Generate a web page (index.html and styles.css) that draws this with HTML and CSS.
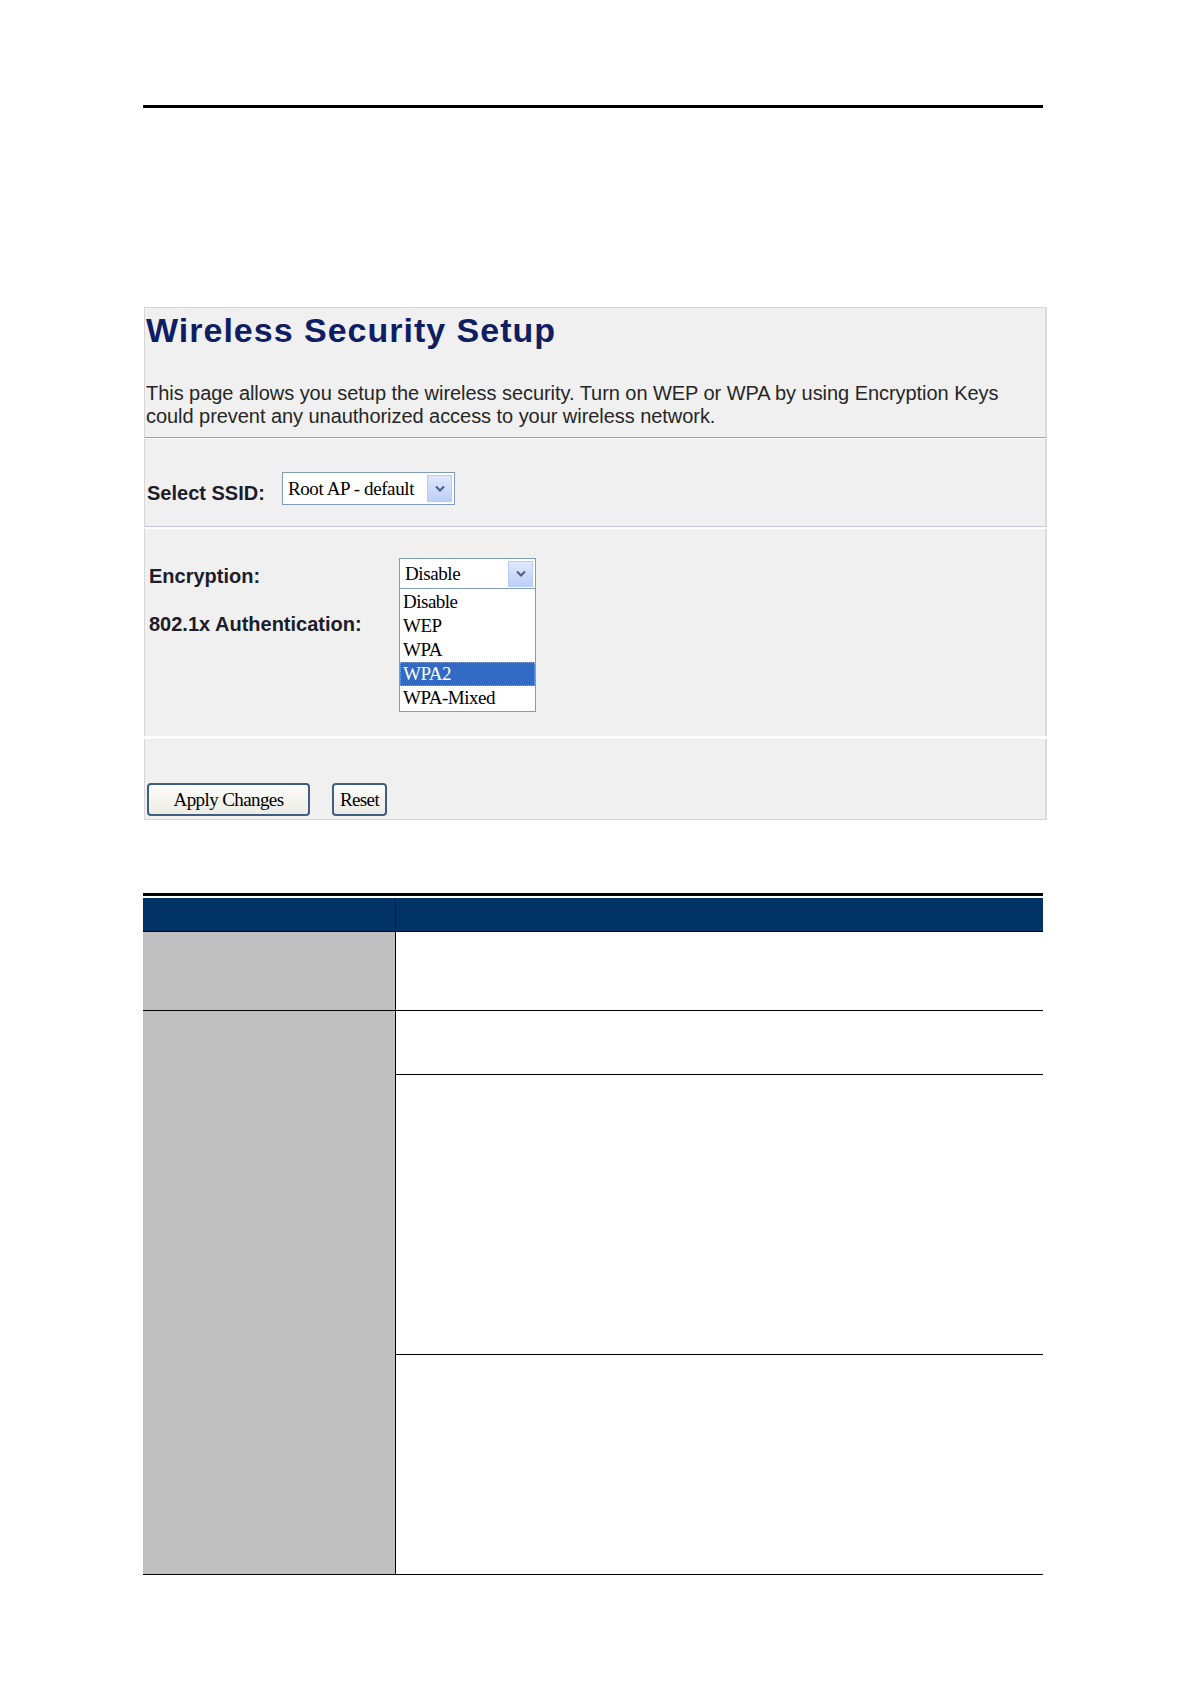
FILE: index.html
```html
<!DOCTYPE html>
<html lang="en">
<head>
  <meta charset="UTF-8">
  <link rel="stylesheet" href="styles.css">
  <title>Wireless Security Setup</title>
</head>
<body>

<div class="page">
  <div class="top-rule"></div>

  <div class="shot">
    <div class="shot-sec intro">
      <h1>Wireless Security Setup</h1>
      <p>This page allows you setup the wireless security. Turn on WEP or WPA by using Encryption Keys<br>could prevent any unauthorized access to your wireless network.</p>
    </div>

    <div class="shot-sec ssid">
      <div class="lbl ssid-lbl">Select SSID:</div>
      <div class="select ssid-select">
        <span class="select-text">Root AP - default</span>
        <span class="arrow"><svg width="10" height="7" viewBox="0 0 10 7"><path d="M1 1.5 L5 5.5 L9 1.5" fill="none" stroke="#4b5f86" stroke-width="2"/></svg></span>
      </div>
    </div>

    <div class="shot-sec enc">
      <div class="labels">
        <div class="lbl enc-lbl">Encryption:</div>
        <div class="lbl auth-lbl">802.1x Authentication:</div>
      </div>
      <div class="enc-field">
        <div class="select enc-select">
          <span class="select-text">Disable</span>
          <span class="arrow"><svg width="10" height="7" viewBox="0 0 10 7"><path d="M1 1.5 L5 5.5 L9 1.5" fill="none" stroke="#4b5f86" stroke-width="2"/></svg></span>
        </div>
        <ul class="options">
          <li>Disable</li>
          <li>WEP</li>
          <li>WPA</li>
          <li class="selected">WPA2</li>
          <li>WPA-Mixed</li>
        </ul>
      </div>
    </div>

    <div class="shot-sec actions">
      <button class="btn apply">Apply Changes</button>
      <button class="btn reset">Reset</button>
    </div>
  </div>

  <div class="table-rule"></div>
  <div class="param-table">
    <div class="th th-name"></div>
    <div class="th th-desc"></div>

    <div class="name-cell row1"></div>
    <div class="desc-cell row1"></div>

    <div class="name-cell row2"></div>
    <div class="desc-cell sub1"></div>
    <div class="desc-cell sub2"></div>
    <div class="desc-cell sub3"></div>
  </div>
</div>

</body>
</html>
```

FILE: styles.css
```css
body {
  margin: 0;
  background: #fff;
  font-family: 'Liberation Sans', Arial, sans-serif;
}

.page {
  width: 900px;
  margin-left: 143px;
}

.top-rule {
  margin-top: 105px;
  height: 3px;
  background: #000;
}

/* screenshot of the router page */
.shot {
  margin-top: 199px;
  margin-left: 1px;
  width: 903px;
}

.shot-sec {
  background: #f0f0f0;
  border-left: 1px solid #d6d6d6;
  border-right: 2px solid #dadada;
}

.intro {
  border-top: 1px solid #d4d4d4;
  padding: 3px 0 9px 1px;
  border-bottom: 1px solid #a4a4a4;
  box-shadow: 0 1px 0 #fafafa;
}

.intro h1 {
  margin: 0;
  font-size: 34px;
  line-height: 38px;
  letter-spacing: 1px;
  font-weight: bold;
  color: #0f1d62;
}

.intro p {
  margin: 33px 0 0;
  font-size: 20px;
  line-height: 23px;
  letter-spacing: -0.05px;
  color: #262626;
}

.lbl {
  font-size: 20px;
  line-height: 23px;
  font-weight: bold;
  color: #1c1c2a;
}

.ssid {
  display: flex;
  align-items: flex-start;
  margin-top: 1px;
  padding: 33px 0 21px 2px;
  border-bottom: 1px solid #c2c3d6;
  box-shadow: 0 1px 0 #fafafa;
}

.ssid-lbl {
  width: 135px;
  margin-top: 10px;
}

.select {
  display: flex;
  align-items: center;
  justify-content: space-between;
  box-sizing: border-box;
  background: #fff;
  border: 1px solid #7f9db9;
  padding: 2px;
}

.select-text {
  font-family: 'Liberation Serif', 'Times New Roman', serif;
  font-size: 19px;
  letter-spacing: -0.4px;
  color: #000;
  padding-left: 3px;
}

.arrow {
  display: flex;
  align-items: center;
  justify-content: center;
  width: 25px;
  height: 26px;
  box-sizing: border-box;
  border: 1px solid #b9ccf2;
  background: linear-gradient(#dfe8fd, #bccff7);
}

.ssid-select {
  width: 173px;
  height: 33px;
}

.ssid-select .arrow {
  height: 27px;
}

.enc {
  display: flex;
  margin-top: 2px;
  padding: 29px 0 24px 4px;
}

.labels {
  width: 250px;
}

.enc-lbl {
  margin-top: 7px;
}

.auth-lbl {
  margin-top: 25px;
}

.enc-field {
  width: 137px;
}

.enc-select {
  height: 31px;
}

.enc-select .arrow {
  height: 26px;
}

.options {
  list-style: none;
  margin: 0;
  padding: 1px 0;
  border: 1px solid #7f9db9;
  border-top: none;
  background: #fff;
}

.options li {
  height: 24px;
  line-height: 24px;
  padding-left: 3px;
  font-family: 'Liberation Serif', 'Times New Roman', serif;
  font-size: 19px;
  letter-spacing: -0.5px;
  color: #000;
}

.options li.selected {
  background: #316ac5;
  color: #fff;
  outline: 1px dotted #8aa8e0;
  outline-offset: -1px;
}

.actions {
  margin-top: 3px;
  padding: 44px 0 3px 2px;
  border-bottom: 1px solid #d6d6d6;
  display: flex;
  gap: 22px;
}

.btn {
  height: 33px;
  box-sizing: border-box;
  border: 2px solid #3f5e84;
  border-radius: 4px;
  background: linear-gradient(#fdfdfb, #ecebe4);
  font-family: 'Liberation Serif', 'Times New Roman', serif;
  font-size: 19px;
  letter-spacing: -0.6px;
  color: #000;
  padding: 0;
}

.apply {
  width: 163px;
}

.reset {
  width: 55px;
}

/* parameter table */
.table-rule {
  margin-top: 73px;
  height: 3px;
  background: #000;
}

.param-table {
  margin-top: 2px;
  display: grid;
  grid-template-columns: 253px 1fr;
}

.th {
  height: 33px;
  background: #013366;
  border-bottom: 1px solid #000;
}

.th-name {
  border-right: 1px solid #0b1a2e;
}

.name-cell {
  background: #c0c0c0;
  border-right: 1px solid #000;
  border-bottom: 1px solid #000;
}

.desc-cell {
  border-bottom: 1px solid #000;
}

.row1 {
  height: 78px;
}

.name-cell.row2 {
  grid-row: span 3;
}

.sub1 {
  height: 63px;
}

.sub2 {
  height: 279px;
}

.sub3 {
  height: 219px;
}
```
